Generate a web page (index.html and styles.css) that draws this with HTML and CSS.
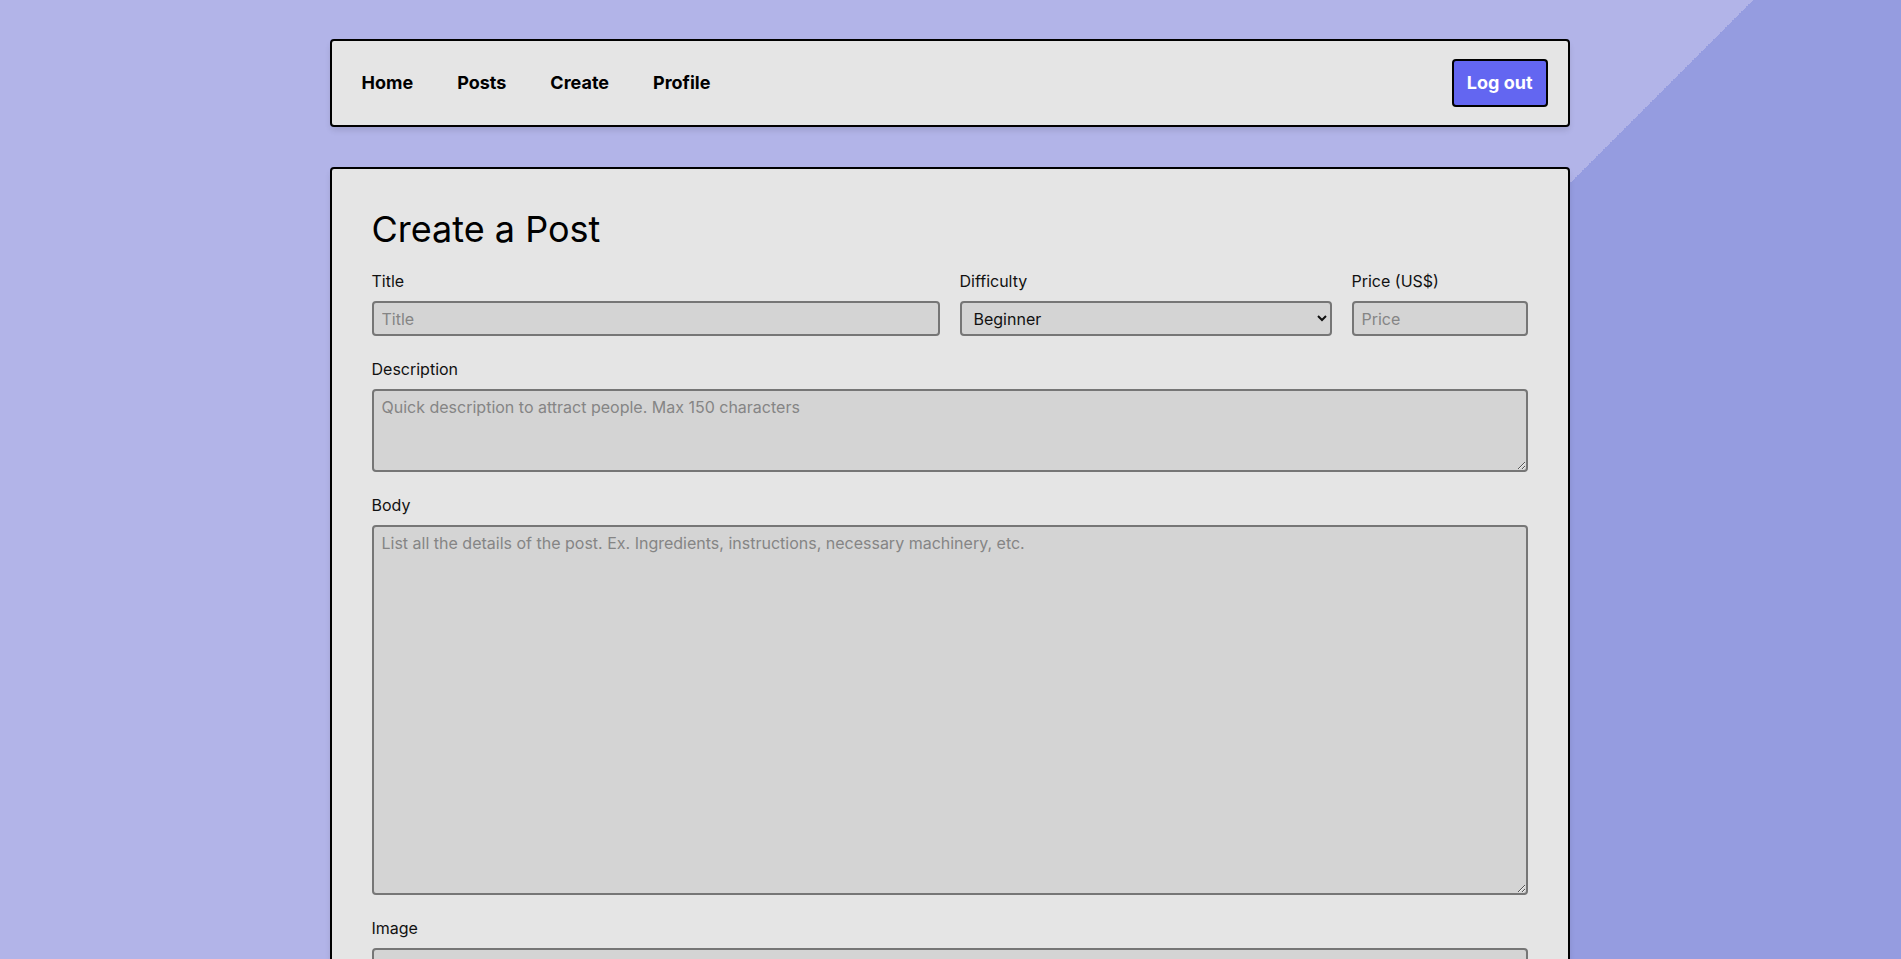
FILE: index.html
```html
<!DOCTYPE html>
<html lang="en">
<head>
<meta charset="utf-8">
<title>Create a Post</title>
<link rel="stylesheet" href="styles.css">
</head>
<body>
<div class="page">
  <nav class="navbar">
    <div class="nav-links">
      <a class="nav-link" href="#">Home</a>
      <a class="nav-link" href="#">Posts</a>
      <a class="nav-link" href="#">Create</a>
      <a class="nav-link" href="#">Profile</a>
    </div>
    <button class="logout" type="button">Log out</button>
  </nav>

  <main class="card">
    <h1 class="card-title">Create a Post</h1>
    <form class="form">
      <div class="row">
        <div class="field span-6">
          <label class="label" for="title">Title</label>
          <input class="control" id="title" type="text" placeholder="Title">
        </div>
        <div class="field span-4">
          <label class="label" for="difficulty">Difficulty</label>
          <select class="control select" id="difficulty">
            <option>Beginner</option>
            <option>Intermediate</option>
            <option>Advanced</option>
          </select>
        </div>
        <div class="field span-2">
          <label class="label" for="price">Price (US$)</label>
          <input class="control" id="price" type="text" placeholder="Price">
        </div>
      </div>
      <div class="field">
        <label class="label" for="description">Description</label>
        <textarea class="control area area-desc" id="description" placeholder="Quick description to attract people. Max 150 characters"></textarea>
      </div>
      <div class="field">
        <label class="label" for="body">Body</label>
        <textarea class="control area area-body" id="body" placeholder="List all the details of the post. Ex. Ingredients, instructions, necessary machinery, etc."></textarea>
      </div>
      <div class="field">
        <label class="label" for="image">Image</label>
        <input class="control" id="image" type="text" placeholder="Image URL">
      </div>
      <div class="actions">
        <button class="submit" type="submit">Create</button>
      </div>
    </form>
  </main>
</div>
</body>
</html>
```

FILE: styles.css
```css
html {
  scrollbar-width: none;
  background: #959ce0 linear-gradient(135deg, #b2b4e8 50%, #959ce0 50%) 0 0 / 1753px 1753px no-repeat;
}
html::-webkit-scrollbar { display: none; }

body {
  margin: 0;
  padding-right: 2px;
  font-family: Inter, "Noto Sans", sans-serif;
  font-size: 16px;
  line-height: 24px;
  color: #111;
}

.page {
  max-width: 1240px;
  margin: 0 auto;
  padding: 39px 0 40px;
  display: flex;
  flex-direction: column;
  gap: 40px;
}

.navbar {
  display: flex;
  align-items: center;
  justify-content: space-between;
  padding: 18px 20px;
  background: #e5e5e5;
  border: 2px solid #000;
  border-radius: 4px;
  box-shadow: 0 4px 6px -1px rgba(0, 0, 0, 0.12);
}

.nav-links {
  display: flex;
  gap: 24px;
}

.nav-link {
  padding: 0 10px;
  font-size: 18px;
  font-weight: 700;
  line-height: 28px;
  color: #000;
  text-decoration: none;
}

.logout {
  padding: 10px 13px;
  font-family: inherit;
  font-size: 18px;
  font-weight: 700;
  line-height: 24px;
  color: #fff;
  background: #6366f1;
  border: 2px solid #000;
  border-radius: 4px;
}

.card {
  padding: 40px;
  background: #e5e5e5;
  border: 2px solid #000;
  border-radius: 4px;
  box-shadow: 0 4px 6px -1px rgba(0, 0, 0, 0.12);
}

.card-title {
  margin: 0 0 20px;
  font-size: 36px;
  line-height: 40px;
  font-weight: 400;
  color: #000;
}

.form {
  display: flex;
  flex-direction: column;
  gap: 21px;
}

.row {
  display: grid;
  grid-template-columns: repeat(12, 1fr);
  column-gap: 20px;
}

.span-6 { grid-column: span 6; }
.span-4 { grid-column: span 4; }
.span-2 { grid-column: span 2; }

.field {
  display: flex;
  flex-direction: column;
}

.label {
  display: block;
  margin-bottom: 8px;
  font-size: 16px;
  line-height: 24px;
  color: #111;
}

.control {
  display: block;
  width: 100%;
  box-sizing: border-box;
  margin: 0;
  padding: 6px 8px 4px;
  font-family: inherit;
  font-size: 16px;
  line-height: 21px;
  color: #111;
  background: #d4d4d4;
  border: 2px solid #767676;
  border-radius: 4px;
  outline: none;
}

.control::placeholder {
  color: #858585;
  opacity: 1;
}

.select {
  height: 35px;
  padding: 0 6px 0 8px;
}

.area {
  resize: both;
}

.area-desc { height: 83px; }
.area-body { height: 370px; }

.actions {
  display: flex;
}

.submit {
  padding: 10px 16px;
  font-family: inherit;
  font-size: 18px;
  font-weight: 700;
  line-height: 24px;
  color: #fff;
  background: #6366f1;
  border: 2px solid #000;
  border-radius: 4px;
}
```
